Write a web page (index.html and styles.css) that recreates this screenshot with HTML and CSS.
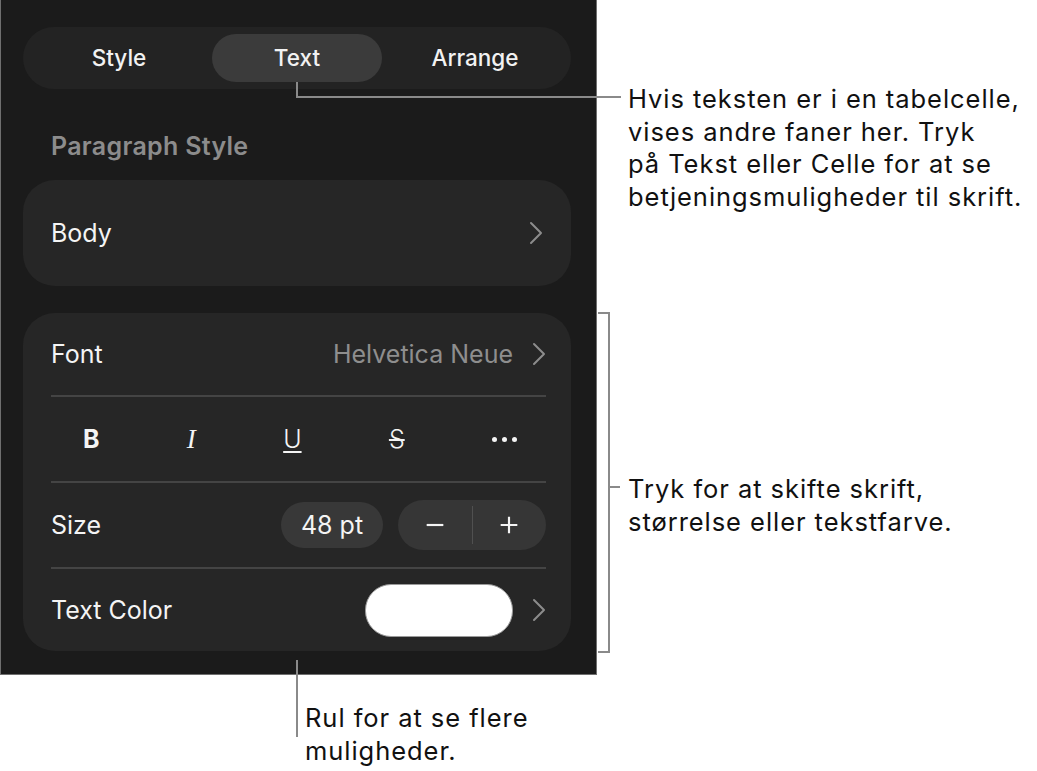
FILE: index.html
```html
<!DOCTYPE html>
<html>
<head>
<meta charset="utf-8">
<link rel="stylesheet" href="styles.css">
</head>
<body>
<div class="page">
  <div class="panel">
    <div class="segmented">
      <div class="seg">Style</div>
      <div class="seg seg-on">Text</div>
      <div class="seg">Arrange</div>
    </div>
    <div class="heading">Paragraph Style</div>
    <div class="card card-body">
      <span class="label">Body</span>
      <svg class="chev" viewBox="0 0 14 24"><path d="M2 2 L12 12 L2 22"/></svg>
    </div>
    <div class="card card-font">
      <div class="row">
        <span class="label">Font</span>
        <span class="right"><span class="value">Helvetica Neue</span><svg class="chev" viewBox="0 0 14 24"><path d="M2 2 L12 12 L2 22"/></svg></span>
      </div>
      <div class="row row-icons">
        <span class="ic ic-b">B</span>
        <span class="ic ic-i">I</span>
        <span class="ic ic-u">U</span>
        <span class="ic ic-s">S</span>
        <span class="ic ic-dots"><i></i><i></i><i></i></span>
      </div>
      <div class="row">
        <span class="label">Size</span>
        <span class="right">
          <span class="pt">48 pt</span>
          <span class="stepper">
            <span class="step"><svg viewBox="0 0 24 24"><path d="M2 12 H22"/></svg></span>
            <span class="step-div"></span>
            <span class="step"><svg viewBox="0 0 24 24"><path d="M2 12 H22 M12 2 V22"/></svg></span>
          </span>
        </span>
      </div>
      <div class="row row-last">
        <span class="label">Text Color</span>
        <span class="right"><span class="swatch"></span><svg class="chev" viewBox="0 0 14 24"><path d="M2 2 L12 12 L2 22"/></svg></span>
      </div>
    </div>
  </div>

  <div class="lead lead-top-v"></div>
  <div class="lead lead-top-h"></div>
  <div class="callout callout-top">Hvis teksten er i en tabelcelle,<br>vises andre faner her. Tryk<br>på Tekst eller Celle for at se<br>betjeningsmuligheder til skrift.</div>

  <div class="bracket"></div>
  <div class="lead lead-mid"></div>
  <div class="callout callout-mid">Tryk for at skifte skrift,<br>størrelse eller tekstfarve.</div>

  <div class="lead lead-bottom"></div>
  <div class="callout callout-bottom">Rul for at se flere<br>muligheder.</div>
</div>
</body>
</html>
```

FILE: styles.css
```css
html, body {
  margin: 0;
  padding: 0;
  background: #ffffff;
}
.page {
  position: relative;
  width: 1037px;
  height: 771px;
  font-family: Inter, "Noto Sans", sans-serif;
}
.panel {
  box-sizing: border-box;
  width: 597px;
  height: 675px;
  background: #1b1b1b;
  border: 1px solid #6f6f6f;
  border-top: none;
  padding: 27px 25px 0 22px;
  color: #ffffff;
}
.segmented {
  height: 62px;
  border-radius: 31px;
  background: #232323;
  display: grid;
  grid-template-columns: 1fr 1fr 1fr;
  align-items: center;
  padding: 0 7px;
}
.seg {
  height: 48px;
  line-height: 48px;
  text-align: center;
  font-size: 22.5px;
  font-weight: 500;
  color: #f2f2f2;
  border-radius: 24px;
  margin: 0 4px;
}
.seg-on {
  background: #3b3b3b;
}
.heading {
  margin: 40px 0 17px 28px;
  line-height: 34px;
  font-size: 25px;
  font-weight: 600;
  letter-spacing: 0.3px;
  color: #8c8c8c;
}
.card {
  background: #262626;
  border-radius: 32px;
}
.card-body {
  height: 106px;
  display: flex;
  align-items: center;
  justify-content: space-between;
  padding: 0 28px 0 28px;
  margin-bottom: 27px;
}
.label {
  font-size: 25px;
  color: #f4f4f4;
}
.chev {
  width: 14px;
  height: 24px;
  fill: none;
  stroke: #8c8c8c;
  stroke-width: 2;
  stroke-linecap: round;
  stroke-linejoin: round;
}
.card-font {
  height: 338px;
  padding: 0 25px 0 28px;
  display: flex;
  flex-direction: column;
}
.row {
  height: 84px;
  display: flex;
  align-items: center;
  justify-content: space-between;
  border-bottom: 2px solid #444444;
}
.row:first-child {
  height: 82px;
}
.row-last {
  border-bottom: none;
  flex: 1;
}
.right {
  display: flex;
  align-items: center;
}
.value {
  font-size: 25px;
  color: #8e8e8e;
  margin-right: 19px;
}
.row-icons {
  padding: 0 29px 0 32px;
}
.ic {
  font-size: 25px;
  color: #f4f4f4;
  line-height: 1;
}
.ic-b {
  font-weight: 700;
}
.ic-i {
  font-family: "Liberation Serif", serif;
  font-style: italic;
  font-size: 27px;
}
.ic-u {
  font-weight: 300;
  text-decoration: underline;
  text-underline-offset: 3px;
  text-decoration-thickness: 2px;
}
.ic-s {
  font-weight: 300;
  text-decoration: line-through;
  text-decoration-thickness: 2px;
}
.ic-dots {
  display: flex;
  gap: 5px;
}
.ic-dots i {
  display: block;
  width: 5px;
  height: 5px;
  border-radius: 50%;
  background: #f4f4f4;
}
.pt {
  width: 102px;
  height: 46px;
  line-height: 46px;
  text-align: center;
  border-radius: 23px;
  background: #383838;
  font-size: 25px;
  color: #f4f4f4;
  margin-right: 15px;
}
.stepper {
  width: 148px;
  height: 50px;
  border-radius: 25px;
  background: #363636;
  display: flex;
  align-items: center;
}
.step {
  flex: 1;
  display: flex;
  justify-content: center;
}
.step svg {
  width: 20px;
  height: 20px;
  fill: none;
  stroke: #f4f4f4;
  stroke-width: 2.6;
}
.step-div {
  width: 1px;
  height: 38px;
  background: #505050;
}
.swatch {
  width: 146px;
  height: 51px;
  border-radius: 26px;
  background: #ffffff;
  border: 1px solid #9a9a9a;
  margin-right: 19px;
}

.lead {
  position: absolute;
  background: #8a8a8a;
}
.lead-top-v {
  left: 296px;
  top: 82px;
  width: 2px;
  height: 16px;
}
.lead-top-h {
  left: 296px;
  top: 96px;
  width: 325px;
  height: 2px;
}
.bracket {
  position: absolute;
  left: 598px;
  top: 312px;
  width: 10px;
  height: 337px;
  border: 2px solid #8a8a8a;
  border-left: none;
}
.lead-mid {
  left: 608px;
  top: 486px;
  width: 12px;
  height: 2px;
}
.lead-bottom {
  left: 296px;
  top: 660px;
  width: 2px;
  height: 77px;
}
.callout {
  position: absolute;
  color: #111111;
  font-size: 25.5px;
  letter-spacing: 0.95px;
  line-height: 32.5px;
  white-space: nowrap;
}
.callout-top {
  left: 628px;
  top: 83px;
}
.callout-mid {
  left: 628px;
  top: 473px;
}
.callout-bottom {
  left: 305px;
  top: 702px;
}
```
